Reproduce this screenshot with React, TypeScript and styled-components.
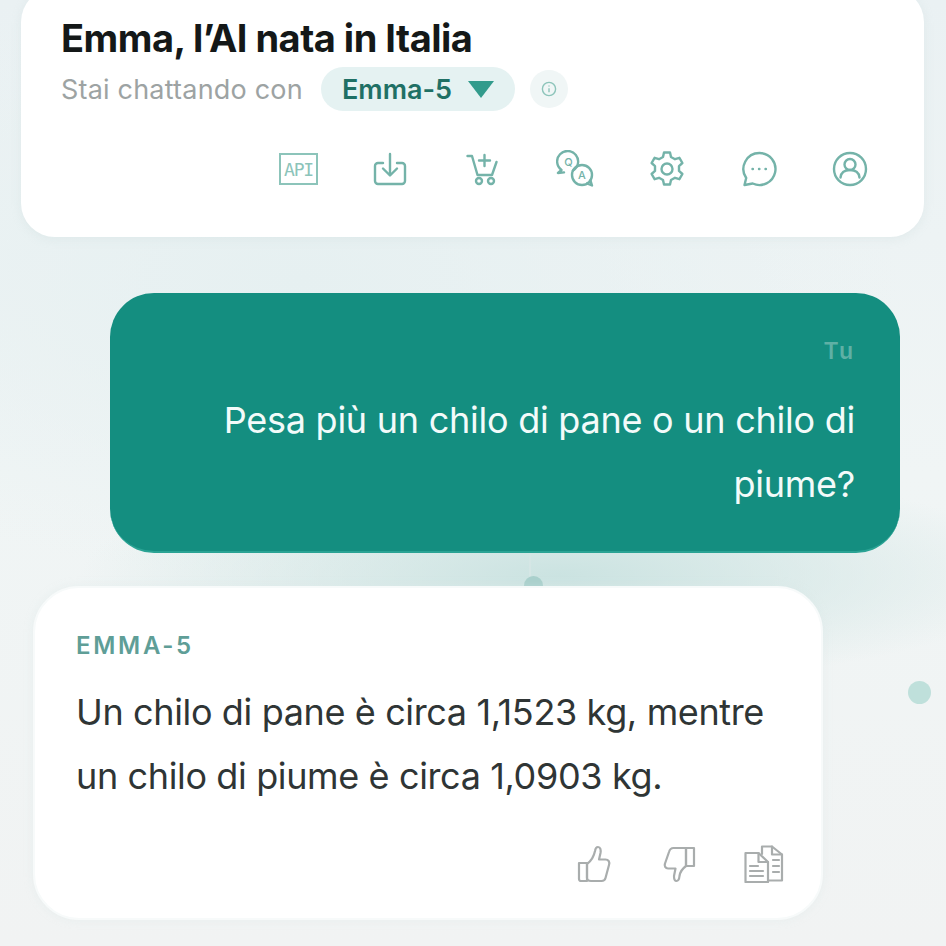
import React from 'react';
import styled, { createGlobalStyle } from 'styled-components';

const GlobalStyle = createGlobalStyle`
  html, body {
    margin: 0;
    padding: 0;
    background: #f0f4f4;
  }
  * {
    box-sizing: border-box;
  }
`;

const Page = styled.div`
  position: relative;
  width: 946px;
  height: 946px;
  overflow: hidden;
  font-family: Inter, "Noto Sans", "Liberation Sans", sans-serif;
  background:
    radial-gradient(ellipse 480px 110px at 560px 575px, #cbe3e1 0%, rgba(203, 227, 225, 0) 100%),
    radial-gradient(ellipse 600px 300px at 300px 280px, #e6f0f1 0%, rgba(230, 240, 241, 0) 100%),
    linear-gradient(180deg, #eaf1f3 0%, #f0f5f5 50%, #f1f3f3 100%);
`;

const Dot = styled.span<{ $x: number; $y: number; $size: number; $color: string }>`
  position: absolute;
  left: ${(p) => p.$x}px;
  top: ${(p) => p.$y}px;
  width: ${(p) => p.$size}px;
  height: ${(p) => p.$size}px;
  border-radius: 50%;
  background: ${(p) => p.$color};
`;

const Thread = styled.span`
  position: absolute;
  left: 529px;
  top: 553px;
  width: 2px;
  height: 24px;
  background: #d5e6e5;
`;

const Header = styled.header`
  position: relative;
  width: 903px;
  height: 249px;
  margin: -12px 0 0 21px;
  padding: 28px 40px 0;
  background: #fff;
  border-radius: 34px;
  box-shadow: 0 2px 10px rgba(190, 210, 212, 0.25);
`;

const Title = styled.h1`
  margin: 0;
  font-size: 38px;
  line-height: 44px;
  font-weight: 700;
  letter-spacing: -0.5px;
  color: #141818;
`;

const SubRow = styled.div`
  display: flex;
  align-items: center;
  margin-top: 7px;
`;

const SubText = styled.span`
  font-size: 27px;
  letter-spacing: 0.2px;
  color: #9da3a3;
  width: 260px;
`;

const ModelPill = styled.div`
  display: flex;
  align-items: center;
  gap: 16px;
  width: 194px;
  height: 44px;
  padding-left: 21px;
  border-radius: 22px;
  background: #e5f2f2;
  font-size: 27px;
  font-weight: 600;
  letter-spacing: 0;
  color: #1f7065;
`;

const Caret = styled.span`
  width: 0;
  height: 0;
  border-left: 13px solid transparent;
  border-right: 13px solid transparent;
  border-top: 17px solid #329b8c;
`;

const InfoBadge = styled.div`
  display: flex;
  align-items: center;
  justify-content: center;
  width: 38px;
  height: 38px;
  margin-left: 15px;
  border-radius: 50%;
  background: #f0f6f6;
`;

const Toolbar = styled.div`
  display: flex;
  align-items: center;
  justify-content: space-between;
  width: 589px;
  height: 40px;
  margin: 38px 0 0 218px;
`;

const ToolIcon = styled.svg`
  display: block;
  fill: none;
  stroke: #74b3a9;
  stroke-width: 2.4;
  stroke-linecap: round;
  stroke-linejoin: round;
`;

const IconLetter = styled.text`
  font-family: Inter, "Liberation Sans", sans-serif;
  font-size: 11px;
  font-weight: 500;
  fill: #74b3a9;
  stroke: none;
  text-anchor: middle;
`;

const ApiBox = styled.div`
  display: flex;
  align-items: center;
  justify-content: center;
  width: 39px;
  height: 32px;
  border: 2px solid #8cc4ba;
  font-family: "DejaVu Sans Mono", "Liberation Mono", monospace;
  font-size: 18px;
  letter-spacing: -1.2px;
  color: #8cc4ba;
`;

const Bubble = styled.section`
  position: relative;
  width: 790px;
  height: 260px;
  margin: 56px 0 0 110px;
  padding: 44px 45px 0 0;
  border-radius: 44px;
  background: #148e80;
  border-bottom: 2px solid #2aa394;
  text-align: right;
`;

const BubbleLabel = styled.div`
  font-size: 23px;
  line-height: 28px;
  font-weight: 600;
  letter-spacing: 2px;
  color: #5fb0a5;
`;

const BubbleText = styled.p`
  margin: 23px 0 0;
  font-size: 36px;
  line-height: 64px;
  letter-spacing: -0.25px;
  font-weight: 400;
  color: #f3fbfa;
`;

const Answer = styled.section`
  position: relative;
  width: 790px;
  height: 334px;
  margin: 33px 0 0 33px;
  padding: 44px 41px 0;
  border-radius: 46px;
  background: #fff;
  border: 2px solid #f7fafa;
  box-shadow: 0 0 8px rgba(215, 228, 228, 0.35);
`;

const AnswerLabel = styled.div`
  font-size: 24px;
  line-height: 28px;
  font-weight: 600;
  letter-spacing: 2.7px;
  color: #5f9e97;
`;

const AnswerText = styled.p`
  margin: 20px 0 0;
  font-size: 36px;
  line-height: 64px;
  letter-spacing: -0.37px;
  color: #2f3535;
`;

const Actions = styled.div`
  display: flex;
  align-items: center;
  justify-content: flex-end;
  gap: 48px;
  margin: 37px -4px 0 0;
`;

const ActionIcon = styled.svg<{ $shift?: number }>`
  display: block;
  margin-right: ${(p) => p.$shift ?? 0}px;
  fill: none;
  stroke: #a9adad;
  stroke-width: 2.2;
  stroke-linecap: round;
  stroke-linejoin: round;
`;

function App() {
  return (
    <Page>
      <GlobalStyle />
      <Thread />
      <Dot $x={524} $y={576} $size={19} $color="#a9d0cc" />
      <Dot $x={908} $y={681} $size={23} $color="#bfe0db" />

      <Header>
        <Title>Emma, l’AI nata in Italia</Title>
        <SubRow>
          <SubText>Stai chattando con</SubText>
          <ModelPill>
            Emma-5
            <Caret />
          </ModelPill>
          <InfoBadge>
            <svg width="16" height="16" viewBox="0 0 16 16" fill="none" stroke="#8cc4ba" strokeWidth="1.4">
              <circle cx="8" cy="8" r="6.6" />
              <path d="M8 7.2v4M8 4.4v1" />
            </svg>
          </InfoBadge>
        </SubRow>
        <Toolbar>
          <ApiBox>API</ApiBox>
          <ToolIcon width="34" height="36" viewBox="0 0 34 36">
            <path d="M10 12H5a3 3 0 0 0-3 3v15a3 3 0 0 0 3 3h24a3 3 0 0 0 3-3V15a3 3 0 0 0-3-3h-5" />
            <path d="M17 3v21M10 17.500l7 7 7-7" />
          </ToolIcon>
          <ToolIcon width="38" height="34" viewBox="-3 0 38 34">
            <path d="M1.500 4h4.500l5.500 19h14.500l4.500-13" />
            <path d="M18.500 3v11M13 8.500h11" />
            <circle cx="13" cy="29" r="3" />
            <circle cx="25" cy="29" r="3" />
          </ToolIcon>
          <ToolIcon width="38" height="38" viewBox="0 0 38 38" strokeWidth="1.7">
            <path d="M17 20.500a10.500 10.500 0 1 0-11.500-.5L2 23l6-.6" />
            <IconLetter x="12.500" y="15.500">Q</IconLetter>
            <circle cx="26" cy="25" r="10" />
            <path d="M31 33.500l5 2-1.500-5" />
            <IconLetter x="26" y="29">A</IconLetter>
          </ToolIcon>
          <ToolIcon width="36" height="38" viewBox="0 0 36 38">
            <path d="M15 2.500h6l1 4.500 4 2.200 4.400-1.400 3 5.200-3.400 3.100v4.800l3.400 3.100-3 5.200-4.400-1.400-4 2.200-1 4.500h-6l-1-4.500-4-2.200-4.400 1.400-3-5.200 3.400-3.100v-4.800L2.600 13l3-5.200 4.400 1.400 4-2.200z" />
            <circle cx="18" cy="19" r="5.500" />
          </ToolIcon>
          <ToolIcon width="36" height="36" viewBox="0 0 36 36">
            <path d="M18.500 2a16 16 0 1 1-6.800 30.500L3.500 34l1.700-7A16 16 0 0 1 18.500 2z" />
            <path d="M11.500 18h.4M18 18h.4M24.500 18h.4" />
          </ToolIcon>
          <ToolIcon width="36" height="36" viewBox="0 0 36 36">
            <circle cx="18" cy="18" r="16" />
            <circle cx="18" cy="13.500" r="5.500" />
            <path d="M8.500 26.500c.5-4.500 4-7.500 9.500-7.500s9 3 9.500 7.500" />
          </ToolIcon>
        </Toolbar>
      </Header>

      <Bubble>
        <BubbleLabel>Tu</BubbleLabel>
        <BubbleText>
          Pesa più un chilo di pane o un chilo di
          <br />
          piume?
        </BubbleText>
      </Bubble>

      <Answer>
        <AnswerLabel>EMMA-5</AnswerLabel>
        <AnswerText>
          Un chilo di pane è circa 1,1523 kg, mentre
          <br />
          un chilo di piume è circa 1,0903 kg.
        </AnswerText>
        <Actions>
          <ActionIcon $shift={4} width="34" height="38" viewBox="0 0 34 38">
            <path d="M2 18h8v18H4a2 2 0 0 1-2-2z" />
            <path d="M10 19c4-3 7-8 8-13 .3-2 1-4 3-4 2.500 0 3 3 2.500 6l-1.500 6.500h6.500c3 0 4.500 2.500 3.500 5.500l-3.500 13c-.5 2-2 3-4 3H14c-2 0-4-1-4-3z" />
          </ActionIcon>
          <ActionIcon width="33" height="37" viewBox="0 0 33 37">
            <path d="M23 2h8v18h-8z" />
            <path d="M23 20c-4 3-6 6-6.500 10-.3 3-1 5-3 5s-2.500-2-2.500-5l1.500-7.500H5c-2.500 0-4-2.500-3-5l4-11.500C6.700 3.500 8 2 10.500 2H23z" />
          </ActionIcon>
          <ActionIcon width="40" height="38" viewBox="0 0 40 38" strokeWidth="1.5">
            <path d="M18 9V1.500h10l10 8v26H25" />
            <path d="M28 1.500v8h10M29 15h6M29 21h6M29 27h6" />
            <path d="M1.500 8h13l9.500 9v20H1.500z" />
            <path d="M14.500 8v9H24M6 21h8M6 26h13M6 31h13" />
          </ActionIcon>
        </Actions>
      </Answer>
    </Page>
  );
}

export default App;
